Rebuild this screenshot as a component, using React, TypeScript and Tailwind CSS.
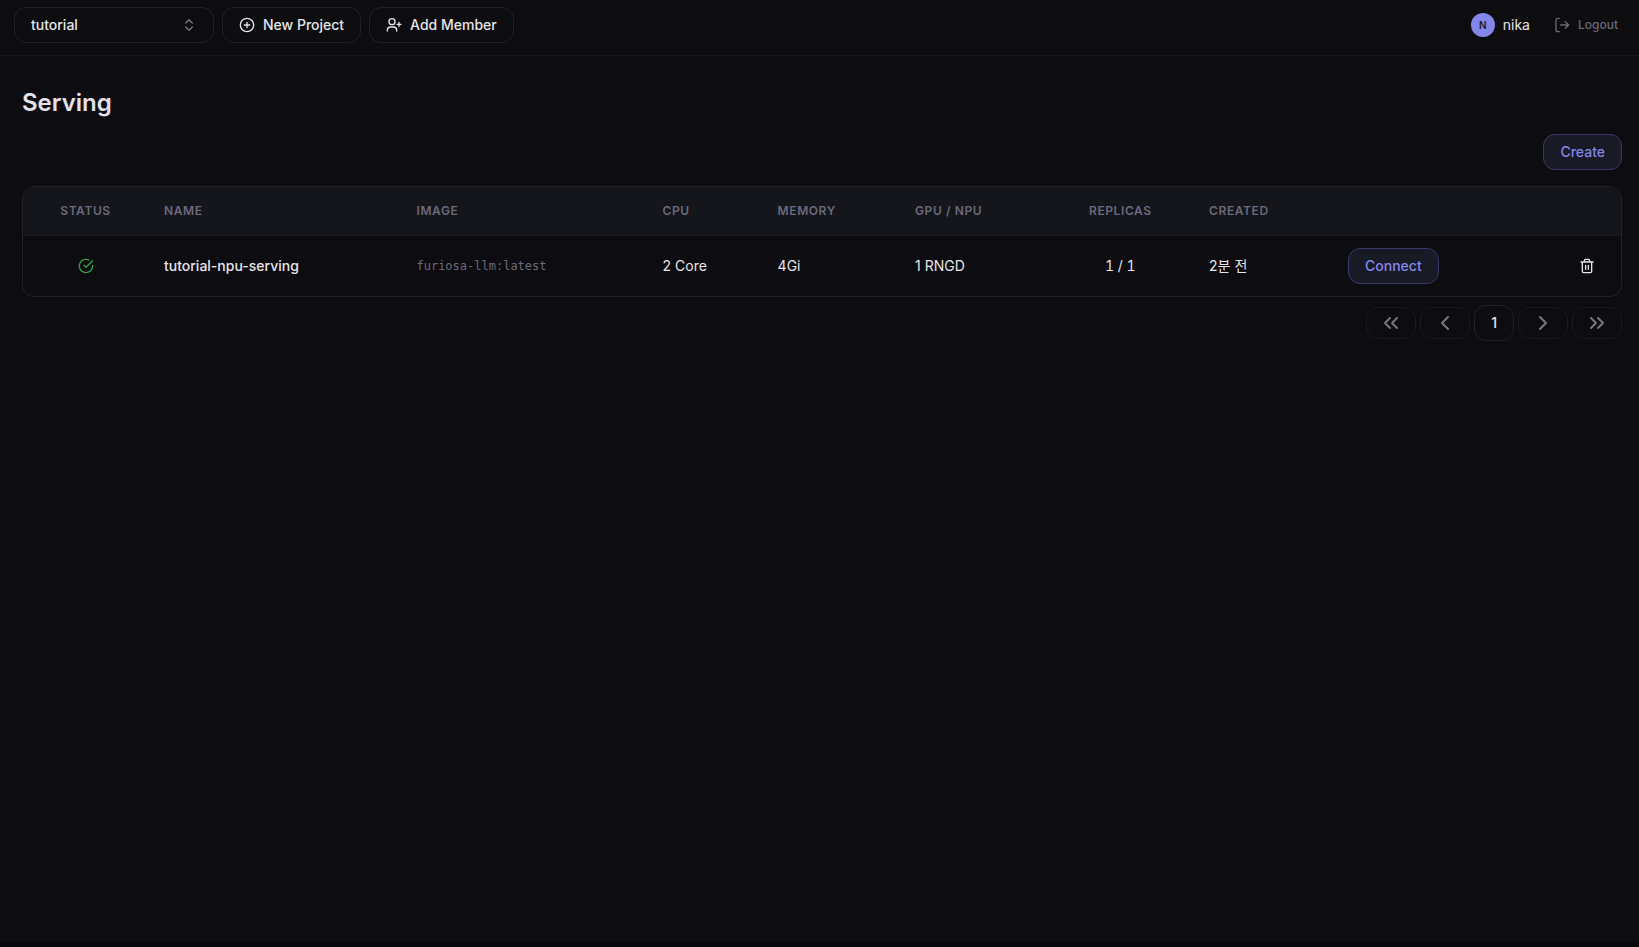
import type { ReactNode } from "react";

type IconProps = { className: string; children: ReactNode };

function Icon({ className, children }: IconProps) {
  return (
    <svg
      viewBox="0 0 24 24"
      fill="none"
      stroke="currentColor"
      strokeWidth="2"
      strokeLinecap="round"
      strokeLinejoin="round"
      aria-hidden="true"
      className={className}
    >
      {children}
    </svg>
  );
}

const outlined =
  "flex h-9 items-center gap-2 rounded-xl border border-[#212129] px-4 text-sm font-medium text-[#e6e6ea]";
const accent =
  "inline-flex h-9 items-center rounded-xl border border-[#38396a] bg-[#181a26] px-4 text-sm font-medium text-[#8586ea]";
const pager =
  "flex h-8 w-[50px] items-center justify-center rounded-xl border border-[#18181d] text-[#77777b]";

function TopBar() {
  return (
    <header className="flex h-14 items-start justify-between border-b border-[#17181b] bg-[#0d0d0f] px-3.5 pt-[7px]">
      <div className="flex gap-2">
        <div className="relative flex items-center">
          <select
            aria-label="Project"
            className="h-9 w-50 appearance-none rounded-xl border border-[#212129] bg-transparent px-4 text-sm font-medium text-[#e6e6ea]"
          >
            <option>tutorial</option>
          </select>
          <Icon className="pointer-events-none absolute right-[17px] size-4 text-[#77777b]">
            <path d="m7 15 5 5 5-5" />
            <path d="m7 9 5-5 5 5" />
          </Icon>
        </div>
        <button type="button" className={outlined}>
          <Icon className="size-4">
            <circle cx="12" cy="12" r="10" />
            <path d="M8 12h8M12 8v8" />
          </Icon>
          New Project
        </button>
        <button type="button" className={outlined}>
          <Icon className="size-4">
            <path d="M2 21v-1a5 5 0 0 1 5-5h4a5 5 0 0 1 5 5v1" />
            <circle cx="9" cy="7" r="4.5" />
            <path d="M19.5 8v6M22.5 11h-6" />
          </Icon>
          Add Member
        </button>
      </div>
      <div className="flex h-9 items-center gap-6 pr-[7px]">
        <div className="flex items-center gap-2">
          <span className="flex size-6 items-center justify-center rounded-full bg-[#8586ea] text-[10px] font-semibold text-[#191a26]">
            N
          </span>
          <span className="text-sm text-[#e6e6ea]">nika</span>
        </div>
        <button type="button" className="flex items-center gap-2 text-xs font-medium text-[#6b697c]">
          <Icon className="size-4">
            <path d="M8 2H6a3 3 0 0 0-3 3v14a3 3 0 0 0 3 3h2M17 17l5-5-5-5M22 12H10" />
          </Icon>
          Logout
        </button>
      </div>
    </header>
  );
}

function ServingTable() {
  return (
    <div className="overflow-hidden rounded-xl border border-[#212129]">
      <table className="w-full table-fixed text-left text-sm text-[#e6e6ea]">
        <colgroup>
          <col className="w-[125px]" />
          <col className="w-[15.8%]" />
          <col className="w-[15.4%]" />
          <col className="w-[7.2%]" />
          <col className="w-[8.6%]" />
          <col className="w-[9.3%]" />
          <col className="w-[9.1%]" />
          <col className="w-[8.7%]" />
          <col />
          <col className="w-[69px]" />
        </colgroup>
        <thead className="bg-[#15161b] text-xs tracking-wider text-[#6b697c] uppercase">
          <tr className="h-12 border-b border-[#1a1a1f]">
            <th className="text-center font-semibold">Status</th>
            <th className="px-4 font-semibold">Name</th>
            <th className="px-4 font-semibold">Image</th>
            <th className="px-4 font-semibold">CPU</th>
            <th className="px-4 font-semibold">Memory</th>
            <th className="px-4 font-semibold">GPU / NPU</th>
            <th className="px-4 text-center font-semibold">Replicas</th>
            <th className="px-4 font-semibold">Created</th>
            <th aria-label="Connection" />
            <th aria-label="Actions" />
          </tr>
        </thead>
        <tbody>
          <tr className="h-[61px]">
            <td>
              <Icon className="mx-auto size-4 text-[#379e48]">
                <path d="M22 11.08V12a10 10 0 1 1-5.93-9.14" />
                <path d="m9 11 3 3L22 4" />
              </Icon>
            </td>
            <td className="px-4 font-medium">tutorial-npu-serving</td>
            <td className="px-4 font-['DejaVu_Sans_Mono',monospace] text-xs text-[#6b697c]">
              furiosa-llm:latest
            </td>
            <td className="px-4">2 Core</td>
            <td className="px-4">4Gi</td>
            <td className="px-4">1 RNGD</td>
            <td className="px-4 text-center tabular-nums">1 / 1</td>
            <td className="px-4">2분 전</td>
            <td className="px-4">
              <button type="button" className={accent}>
                Connect
              </button>
            </td>
            <td>
              <button type="button" aria-label="Delete" className="mx-auto block">
                <Icon className="size-4">
                  <path d="M3 6h18M19 6v14a2 2 0 0 1-2 2H7a2 2 0 0 1-2-2V6M8 6V4a2 2 0 0 1 2-2h4a2 2 0 0 1 2 2v2M10 11v6M14 11v6" />
                </Icon>
              </button>
            </td>
          </tr>
        </tbody>
      </table>
    </div>
  );
}

function Pagination() {
  return (
    <nav aria-label="Pagination" className="mt-2 flex items-center justify-end gap-1">
      <button type="button" aria-label="First page" className={pager}>
        <Icon className="size-6">
          <path d="m11 17-5-5 5-5M18 17l-5-5 5-5" />
        </Icon>
      </button>
      <button type="button" aria-label="Previous page" className={pager}>
        <Icon className="size-6">
          <path d="m15 18-6-6 6-6" />
        </Icon>
      </button>
      <button type="button" aria-current="page" className={outlined}>
        1
      </button>
      <button type="button" aria-label="Next page" className={pager}>
        <Icon className="size-6">
          <path d="m9 18 6-6-6-6" />
        </Icon>
      </button>
      <button type="button" aria-label="Last page" className={pager}>
        <Icon className="size-6">
          <path d="m6 17 5-5-5-5M13 17l5-5-5-5" />
        </Icon>
      </button>
    </nav>
  );
}

export default function App() {
  return (
    <div className="flex min-h-screen flex-col bg-[#0d0c11] font-['Inter','Noto_Sans_CJK_KR',sans-serif]">
      <TopBar />
      <main className="flex-1 pt-[31px] pr-[17px] pl-[22px]">
        <h1 className="text-2xl font-semibold text-[#e3e1ea]">Serving</h1>
        <div className="mt-[15px] mb-4 flex justify-end">
          <button type="button" className={accent}>
            Create
          </button>
        </div>
        <ServingTable />
        <Pagination />
      </main>
      <div className="h-1 bg-[#08070b]" />
    </div>
  );
}
